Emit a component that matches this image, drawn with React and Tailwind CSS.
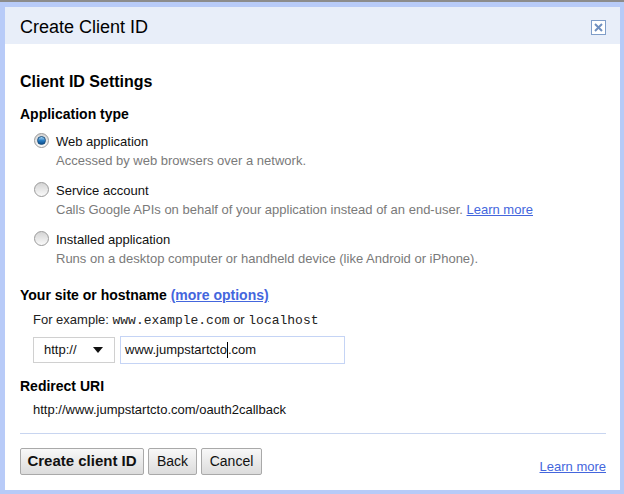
const Radio = ({ checked }) => (
  <span className="w-[15px] h-[15px] rounded-full border border-[#9a9a9a] bg-gradient-to-b from-[#d4d4d4] to-[#fafafa] flex items-center justify-center shrink-0">
    {checked && (
      <span className="w-[9px] h-[9px] rounded-full bg-gradient-to-b from-[#a6d8f7] via-[#2a7fc4] to-[#0d4f8f] border border-[#1b4f7e]" />
    )}
  </span>
);

const Option = ({ checked, title, children, className = "" }) => (
  <div className={`flex ${className}`}>
    <div className="w-[36px] pl-[14px] pt-[1px]">
      <Radio checked={checked} />
    </div>
    <div className="text-[13px] leading-[19px]">
      <div className="text-[#111]">{title}</div>
      <div className="text-[#7a7a7a]">{children}</div>
    </div>
  </div>
);

const Button = ({ children, className = "" }) => (
  <button className={`h-[27px] border border-[#a9a9a9] rounded-[2px] bg-gradient-to-b from-[#f8f8f8] to-[#dcdcdc] text-[14px] text-[#111] flex items-center justify-center ${className}`}>
    {children}
  </button>
);

export default function App() {
  return (
    <div className="w-[624px] h-[494px] bg-[#b8cbf8] flex flex-col font-['Liberation_Sans',Arial,sans-serif] overflow-hidden">
      <div className="h-[2px] bg-[#8c8c8c]" />
      <div className="flex-1 ml-[5px] mr-[4px] mt-[5px] mb-[4px] bg-white flex flex-col">
        <div className="h-[37px] bg-[#e8eef9] flex items-center justify-between pl-[15px] pr-[14px] pt-[3px]">
          <h1 className="text-[18px] text-black">Create Client ID</h1>
          <button className="w-[15px] h-[15px] border border-[#7f9dc8] bg-white flex items-center justify-center">
            <svg width="9" height="9" viewBox="0 0 9 9">
              <path d="M1 1L8 8M8 1L1 8" stroke="#6f8fbf" strokeWidth="2" />
            </svg>
          </button>
        </div>

        <div className="pl-[15px] pr-[14px] flex flex-col">
          <h2 className="mt-[28px] text-[16px] leading-[20px] font-bold text-black">Client ID Settings</h2>
          <h3 className="mt-[13px] text-[14px] leading-[18px] font-bold text-black">Application type</h3>

          <Option className="mt-[9px]" checked title="Web application">
            Accessed by web browsers over a network.
          </Option>
          <Option className="mt-[11px]" title="Service account">
            Calls Google APIs on behalf of your application instead of an end-user.{" "}
            <a className="text-[#4466dd] underline">Learn more</a>
          </Option>
          <Option className="mt-[11px]" title="Installed application">
            Runs on a desktop computer or handheld device (like Android or iPhone).
          </Option>

          <div className="mt-[18px] text-[14px] leading-[19px] font-bold text-black">
            Your site or hostname <a className="text-[#4466dd] underline">(more options)</a>
          </div>
          <div className="mt-[5px] pl-[13px] text-[13px] leading-[19px] text-[#222]">
            For example: <span className="font-['Liberation_Mono',monospace]">www.example.com</span> or{" "}
            <span className="font-['Liberation_Mono',monospace]">localhost</span>
          </div>

          <div className="mt-[6px] pl-[13px] flex items-center h-[28px]">
            <div className="w-[82px] h-[26px] border border-[#d0d0d0] flex items-center justify-between pl-[10px] pr-[11px] text-[13px] text-[#111]">
              <span>http://</span>
              <svg width="10" height="6" viewBox="0 0 10 6">
                <path d="M0 0H10L5 6Z" fill="#111" />
              </svg>
            </div>
            <div className="ml-[5px] w-[225px] h-[28px] border border-[#c5d4f5] flex items-center pl-[4px] text-[13px] text-[#111]">
              www.jumpstartcto<span className="inline-block w-px h-[16px] bg-black" />.com
            </div>
          </div>

          <div className="mt-[13px] text-[14px] leading-[19px] font-bold text-black">Redirect URI</div>
          <div className="mt-[4px] pl-[13px] text-[13px] leading-[19px] text-[#111]">
            http://www.jumpstartcto.com/oauth2callback
          </div>

          <div className="mt-[14px] h-px bg-[#c8d5f0]" />

          <div className="mt-[14px] flex items-start">
            <Button className="w-[124px] font-bold text-[15px]">Create client ID</Button>
            <Button className="ml-[4px] w-[49px]">Back</Button>
            <Button className="ml-[4px] w-[61px]">Cancel</Button>
            <a className="ml-auto mt-[9px] text-[13px] leading-[19px] text-[#4466dd] underline">Learn more</a>
          </div>
        </div>
      </div>
    </div>
  );
}
